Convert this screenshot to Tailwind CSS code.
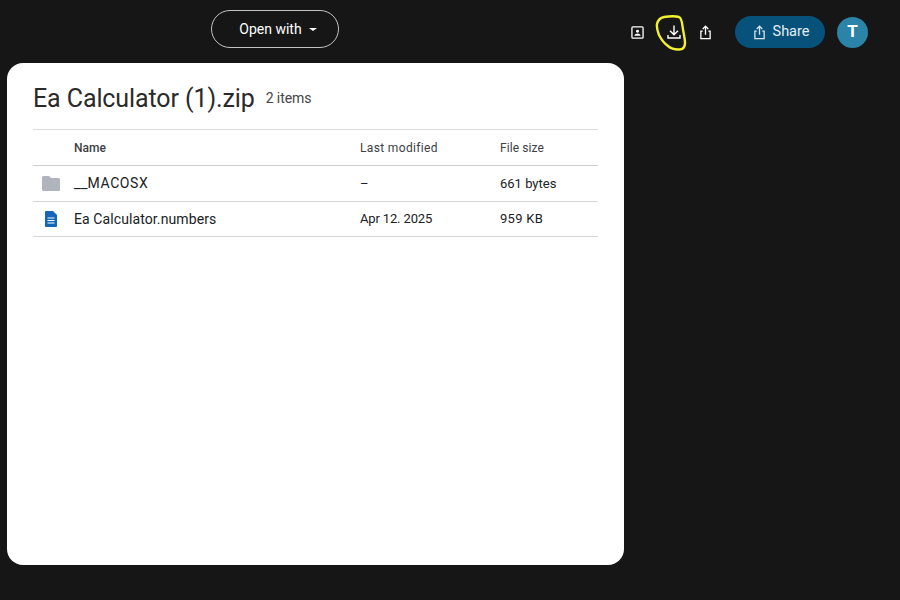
<!DOCTYPE html>
<html lang="en">

<head>
    <meta charset="UTF-8" />
    <title>Ea Calculator (1).zip</title>
    <script src="https://cdn.jsdelivr.net/npm/@tailwindcss/browser@4"></script>
</head>

<body class="w-[900px] h-[600px] overflow-hidden bg-[#161616] font-['Roboto',sans-serif]">

    <!-- top bar -->
    <header class="h-[63px] flex items-start">
        <button class="ml-[211px] mt-[10px] w-[128px] h-[38px] rounded-full border border-[#c4c4c4] flex items-center justify-center text-white text-[14px]">
            <span class="ml-[6px]">Open with</span>
            <span class="ml-[7px] w-0 h-0 border-x-[4px] border-x-transparent border-t-[3px] border-t-white"></span>
        </button>

        <div class="ml-[292px] mt-[16px] h-[32px] flex items-center">
            <!-- add to drive -->
            <svg class="w-[13px] h-[13px]" viewBox="0 0 14 14" fill="none">
                <rect x="1" y="1" width="12" height="12" rx="1" stroke="#fff" stroke-width="1.400" />
                <circle cx="7" cy="5.600" r="1.600" fill="#fff" />
                <path d="M3.600 10.600c.5-1.700 1.900-2.400 3.400-2.400s2.900.7 3.400 2.400z" fill="#fff" />
            </svg>
            <!-- download -->
            <div class="relative ml-[23px] w-[14px] h-[14px]">
                <svg class="w-[14px] h-[14px]" viewBox="0 0 14 14" fill="none" stroke="#fff" stroke-width="1.400">
                    <path d="M7 0.500v9M3 5.800l4 4 4-4M1 10v3h12v-3" />
                </svg>
                <!-- yellow marker circle -->
                <svg class="absolute left-[-12px] top-[-10px] w-[32px] h-[37px]" viewBox="0 0 32 37" fill="none" stroke="#f3f02c" stroke-width="2.400" stroke-linecap="round">
                    <path d="M2 9C3 5 6 2.500 9 2c5-.8 11-1.200 15 0 2.500 1 3 5 3.500 9 .5 5 2.500 12 2.500 17 0 4-2 6.500-6 6.500-4 .2-8-1-11-3.500C9.500 28.500 6 24 4 20 2.500 16 1.500 12 2 9z" />
                </svg>
            </div>
            <!-- share -->
            <svg class="ml-[18px] w-[13px] h-[15px]" viewBox="0 0 14 16" fill="none" stroke="#fff" stroke-width="1.400">
                <path d="M4 6.500H2v8h10v-8h-2M7 10.500V1.500M4 4.200L7 1.300l3 2.900" />
            </svg>

            <button class="ml-[23px] w-[90px] h-[32px] rounded-full bg-[#07527a] flex items-center justify-center text-[14.500px] text-[#e4eef3]">
                <svg class="ml-[2px] w-[13px] h-[15px] mr-[7px]" viewBox="0 0 14 16" fill="none" stroke="#d5e5ee" stroke-width="1.400">
                    <path d="M4 6.500H2v8h10v-8h-2M7 10.500V1.500M4 4.200L7 1.300l3 2.900" />
                </svg>
                Share
            </button>

            <div class="ml-[12px] w-[31px] h-[31px] rounded-full bg-[#2b83a8] flex items-center justify-center text-white text-[17px] font-bold">T</div>
        </div>
    </header>

    <!-- zip preview card -->
    <main class="ml-[7px] w-[617px] h-[502px] bg-white rounded-[16px] pl-[26px] pr-[26px] pt-[12px]">
        <div class="h-[48px] mb-[6px] flex items-center">
            <h1 class="text-[25px] text-[#2a2a2a] tracking-[-0.1px]">Ea Calculator (1).zip</h1>
            <span class="ml-[11px] mb-[2px] text-[14px] text-[#444] tracking-[-0.1px]">2 items</span>
        </div>

        <div class="grid grid-cols-[41px_286px_140px_1fr] text-[13px] text-[#202124] border-t border-[#dcdcdc] items-center">
            <div class="col-span-4 grid grid-cols-subgrid items-center h-[36px] border-b border-[#cfcfcf] text-[12px] text-[#3c4043]">
                <span class="col-start-2 font-medium">Name</span>
                <span class="tracking-[0.35px]">Last modified</span>
                <span class="tracking-[0.1px]">File size</span>
            </div>

            <div class="col-span-4 grid grid-cols-subgrid items-center h-[36px] border-b border-[#d6d6d6]">
                <svg class="ml-[9px] w-[18px] h-[15px]" viewBox="0 0 18 15">
                    <path d="M1.500 0H7l2 2h7.500A1.500 1.500 0 0 1 18 3.500v10a1.500 1.500 0 0 1-1.500 1.500h-15A1.500 1.500 0 0 1 0 13.500v-12A1.500 1.500 0 0 1 1.500 0z" fill="#b0b5bd" />
                </svg>
                <span class="text-[14px] tracking-[0.6px]"><span class="text-[15px] tracking-normal">__</span>MACOSX</span>
                <span>–</span>
                <span>661 bytes</span>
            </div>

            <div class="col-span-4 grid grid-cols-subgrid items-center h-[35px] border-b border-[#d6d6d6]">
                <svg class="ml-[12px] w-[12px] h-[16px]" viewBox="0 0 12 16">
                    <path d="M1 0h7l4 4v11a1 1 0 0 1-1 1H1a1 1 0 0 1-1-1V1a1 1 0 0 1 1-1z" fill="#1565b8" />
                    <path d="M2.500 7h7M2.500 9.500h7M2.500 12h7" stroke="#fff" stroke-width="1.100" />
                </svg>
                <span class="text-[14px] tracking-[0.1px]">Ea Calculator.numbers</span>
                <span class="tracking-[-0.15px]">Apr 12. 2025</span>
                <span class="tracking-[0.3px]">959 KB</span>
            </div>
        </div>
    </main>

</body>

</html>
